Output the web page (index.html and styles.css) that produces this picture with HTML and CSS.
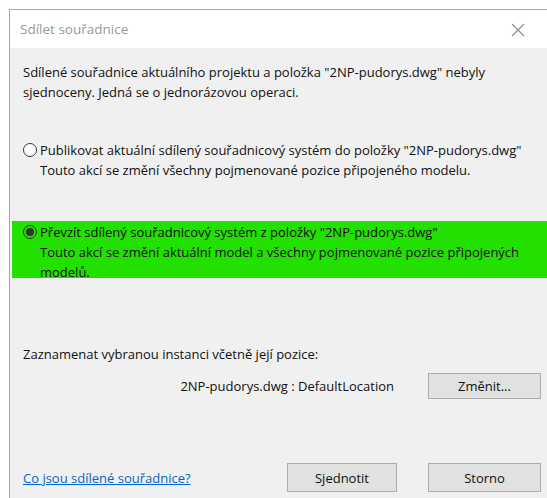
FILE: index.html
```html
<!DOCTYPE html>
<html lang="cs">
<head>
<meta charset="utf-8">
<title>Sdílet souřadnice</title>
<link rel="stylesheet" href="styles.css">
</head>
<body>
<div class="window">
  <div class="titlebar">
    <span class="title">Sdílet souřadnice</span>
    <svg class="close" width="14" height="14" viewBox="0 0 14 14"><path d="M1 1L13 13M13 1L1 13" stroke="#8a8a8a" stroke-width="1.1" fill="none"/></svg>
  </div>
  <div class="content">
    <p class="intro">Sdílené souřadnice aktuálního projektu a položka "2NP-pudorys.dwg" nebyly<br>sjednoceny. Jedná se o jednorázovou operaci.</p>

    <label class="option">
      <span class="radio"></span>
      <span class="option-text">Publikovat aktuální sdílený souřadnicový systém do položky "2NP-pudorys.dwg"<br>Touto akcí se změní všechny pojmenované pozice připojeného modelu.</span>
    </label>

    <label class="option option-marked">
      <span class="radio radio-checked"></span>
      <span class="option-text">Převzít sdílený souřadnicový systém z položky "2NP-pudorys.dwg"<br>Touto akcí se změní aktuální model a všechny pojmenované pozice připojených<br>modelů.</span>
    </label>

    <p class="record">Zaznamenat vybranou instanci včetně její pozice:</p>
    <div class="location-row">
      <span class="location">2NP-pudorys.dwg : DefaultLocation</span>
      <button class="btn btn-change">Změnit...</button>
    </div>

    <div class="footer">
      <a class="help" href="#">Co jsou sdílené souřadnice?</a>
      <div class="actions">
        <button class="btn">Sjednotit</button>
        <button class="btn">Storno</button>
      </div>
    </div>
  </div>
</div>
</body>
</html>
```

FILE: styles.css
```css
html, body {
  margin: 0;
  padding: 0;
  background: #ffffff;
}

body {
  font-family: "Open Sans", "Noto Sans", sans-serif;
  font-size: 13px;
  color: #111;
  overflow: hidden;
}

.window {
  margin: 9px 0 0 9px;
  width: 560px;
  height: 500px;
  border-left: 1px solid #a8a8a8;
  border-top: 1px solid #a8a8a8;
  background: #f0f0f0;
  display: flex;
  flex-direction: column;
}

.titlebar {
  height: 38px;
  background: #fff;
  display: flex;
  align-items: center;
  padding-left: 10px;
  position: relative;
}

.title {
  color: #999;
  font-size: 13.5px;
}

.close {
  position: absolute;
  left: 501px;
  top: 13px;
}

.content {
  display: flex;
  flex-direction: column;
  padding: 14px 0 0 13px;
  line-height: 20px;
}

.intro {
  margin: 0;
}

.option {
  display: flex;
  align-items: flex-start;
  gap: 3px;
}

.option:first-of-type {
  margin-top: 38px;
}

.radio {
  width: 12px;
  height: 12px;
  border: 1px solid #333;
  border-radius: 50%;
  background: #fff;
  margin-top: 3px;
  flex: none;
  box-sizing: content-box;
  display: flex;
  align-items: center;
  justify-content: center;
}

.radio-checked {
  background: transparent;
}

.radio-checked::after {
  content: "";
  width: 8px;
  height: 8px;
  border-radius: 50%;
  background: #333;
}

.option-marked {
  margin: 41px 0 0 -11px;
  padding: 1px 0 0 11px;
  height: 56px;
  background: #22e000;
}

.record {
  margin: 66px 0 0;
}

.location-row {
  display: flex;
  align-items: center;
  justify-content: flex-end;
  gap: 34px;
  margin-top: 9px;
  width: 518px;
}

.btn {
  font: inherit;
  color: #111;
  background: #e1e1e1;
  border: 1px solid #adadad;
  width: 113px;
  height: 26px;
  padding: 0;
}

.footer {
  display: flex;
  align-items: center;
  justify-content: space-between;
  margin-top: 64px;
  width: 518px;
}

.help {
  color: #0066cc;
  text-decoration: underline;
}

.actions {
  display: flex;
  gap: 31px;
}

.actions .btn {
  height: 29px;
  width: 110px;
}

.actions .btn + .btn {
  width: 113px;
}
```
